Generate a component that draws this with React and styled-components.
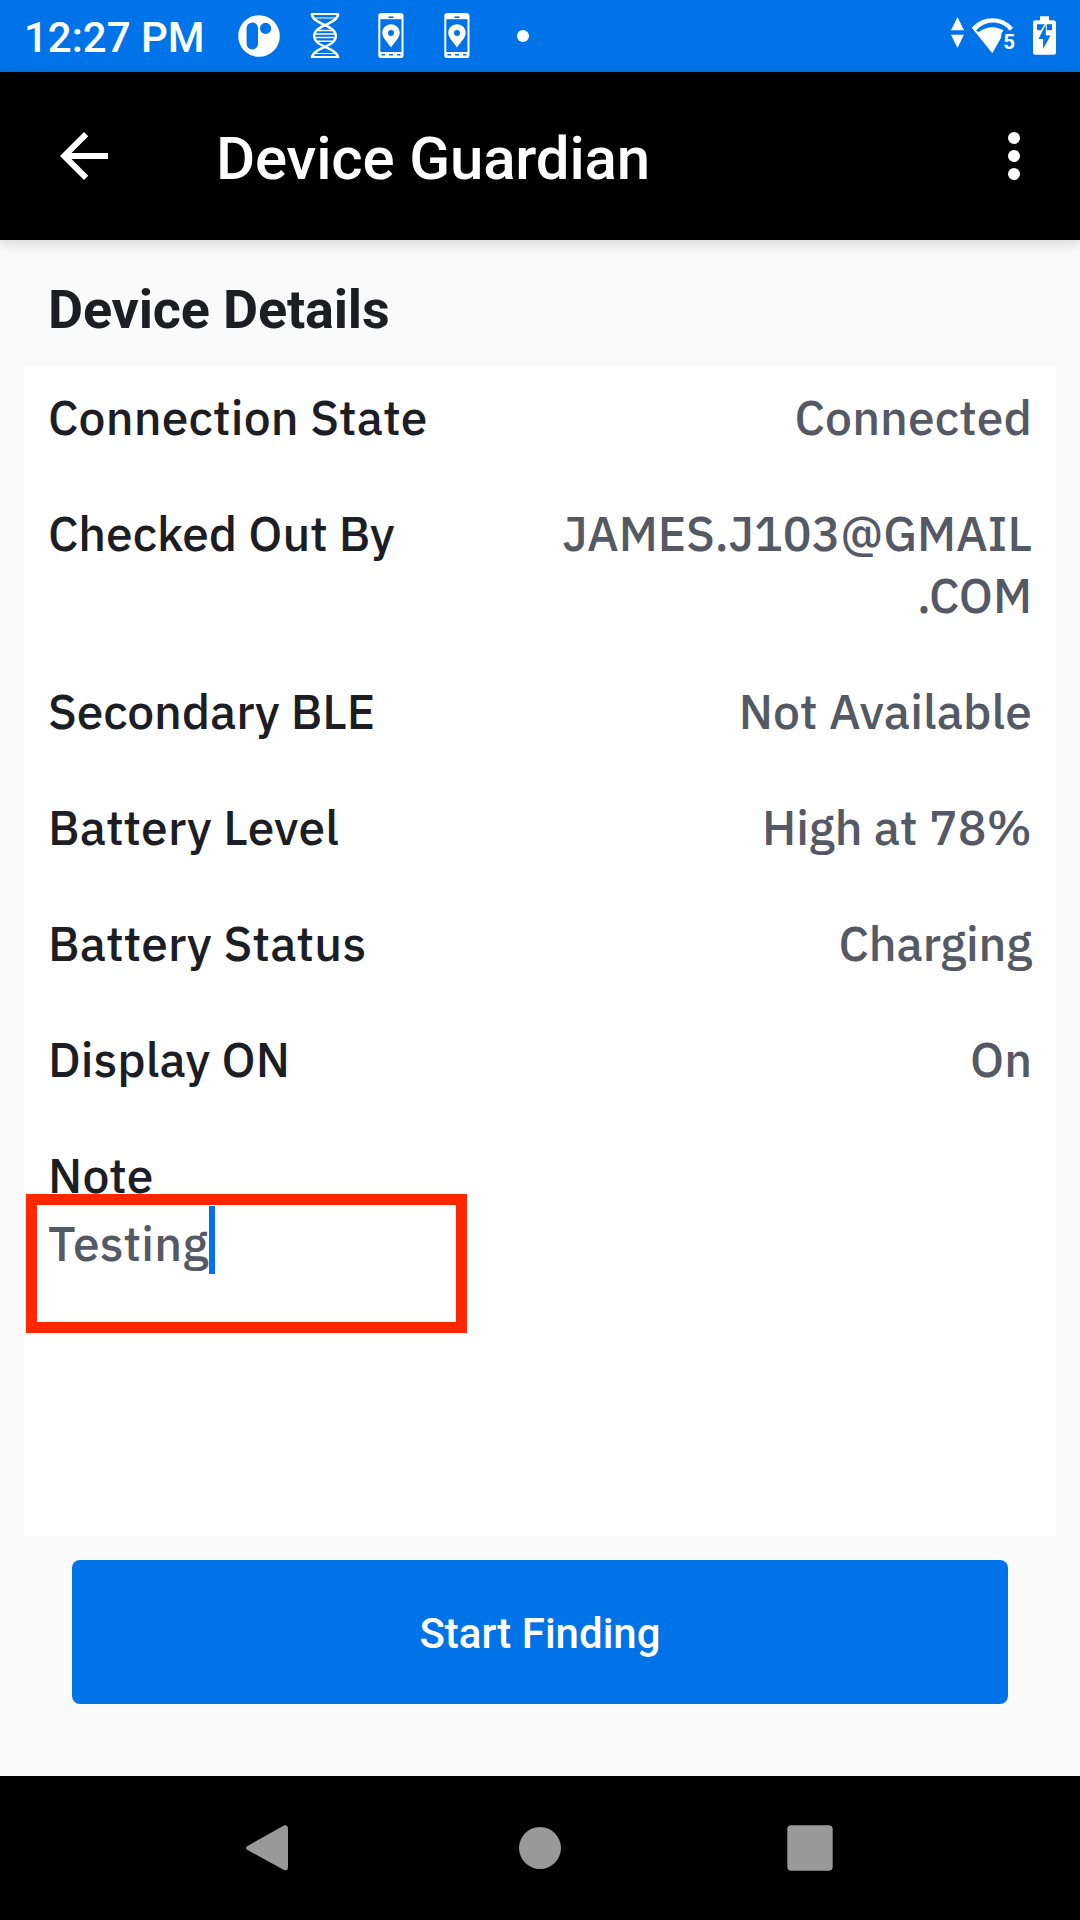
import React from "react";
import styled, { createGlobalStyle } from "styled-components";

const blue = "#0073e8";

const GlobalStyle = createGlobalStyle`
  * { box-sizing: border-box; }
  body { margin: 0; background: #fafafa; }
`;

const Screen = styled.div`
  display: flex;
  flex-direction: column;
  width: 1080px;
  height: 1920px;
  overflow: hidden;
  background: #fafafa;
  font-family: Roboto, "Noto Sans", sans-serif;
`;

const StatusBar = styled.header`
  display: flex;
  align-items: center;
  flex: none;
  height: 72px;
  padding-left: 24px;
  background: ${blue};
  color: #fff;
`;

const Clock = styled.time`
  width: 202px;
  padding-top: 3px;
  font-size: 42px;
  font-weight: 500;
  line-height: 50px;
  white-space: nowrap;
`;

const StatusIcon = styled.svg`
  display: block;
  flex: none;
  width: ${(p) => p.$width}px;
  height: 72px;
`;

const SystemIcons = styled.div`
  display: flex;
  margin-left: auto;
`;

const AppBar = styled.div`
  display: flex;
  align-items: center;
  flex: none;
  height: 168px;
  padding: 0 30px 0 48px;
  background: #000;
  color: #fff;
  box-shadow: 0 3px 12px rgba(0, 0, 0, 0.16);
`;

const IconButton = styled.button`
  display: flex;
  width: 72px;
  height: 72px;
  padding: 0;
  border: 0;
  background: none;
  color: inherit;

  svg {
    width: 72px;
    height: 72px;
    fill: currentColor;
  }
`;

const AppTitle = styled.h1`
  flex: 1;
  margin: 0;
  padding: 5px 0 0 96px;
  font-size: 60px;
  font-weight: 500;
  line-height: 70px;
  letter-spacing: -0.16px;
`;

const Content = styled.main`
  display: flex;
  flex-direction: column;
  flex: 1;
  padding: 38px 24px 72px;
`;

const SectionTitle = styled.h2`
  margin: 0 0 25px;
  padding-left: 24px;
  color: #1d1e23;
  font-size: 54px;
  font-weight: 700;
  line-height: 64px;
  letter-spacing: -0.18px;
`;

const Card = styled.section`
  display: flex;
  flex-direction: column;
  gap: 54px;
  flex: 1;
  padding: 19px 24px;
  background: #fff;
  font-family: "IBM Plex Sans", "Noto Sans", sans-serif;
  font-size: 48px;
  font-weight: 500;
  line-height: 62px;
`;

const Row = styled.div`
  display: flex;
  justify-content: space-between;
  align-items: flex-start;
`;

const Label = styled.span`
  color: #1d1e23;
  letter-spacing: ${(p) => p.$track || 0}px;
  white-space: nowrap;
`;

const Value = styled.span`
  max-width: 478px;
  color: #555964;
  letter-spacing: ${(p) => p.$track || 0}px;
  text-align: right;
  overflow-wrap: anywhere;
`;

const NoteBlock = styled.div`
  position: relative;
  display: flex;
  flex-direction: column;
  gap: 6px;
`;

const NoteInput = styled.div`
  display: flex;
  height: 62px;
  color: #555964;
  letter-spacing: 0.3px;
`;

const Caret = styled.span`
  width: 6px;
  height: 68px;
  margin-top: -6px;
  background: ${blue};
`;

const Highlight = styled.div`
  position: absolute;
  left: -22px;
  top: 50px;
  width: 441px;
  height: 139px;
  border: 11px solid #ff2600;
`;

const PrimaryButton = styled.button`
  flex: none;
  height: 144px;
  margin: 24px 48px 0;
  padding: 3px 0 0;
  border: 0;
  border-radius: 8px;
  background: ${blue};
  color: #fff;
  font-family: inherit;
  font-size: 42px;
  font-weight: 500;
`;

const NavBar = styled.nav`
  display: flex;
  flex: none;
  justify-content: center;
  gap: 198px;
  height: 144px;
  background: #000;

  svg {
    width: 72px;
    height: 144px;
    fill: #999;
  }
`;

const details = [
  { label: "Connection State", value: "Connected", labelTrack: 0.16, valueTrack: 0.1 },
  { label: "Checked Out By", value: "JAMES.J103@GMAIL.COM", labelTrack: -0.08, valueTrack: -0.06 },
  { label: "Secondary BLE", value: "Not Available", labelTrack: -0.12, valueTrack: 0.06 },
  { label: "Battery Level", value: "High at 78%", labelTrack: 0.19, valueTrack: 0 },
  { label: "Battery Status", value: "Charging", labelTrack: 0.22, valueTrack: -0.1 },
  { label: "Display ON", value: "On", labelTrack: 0.04, valueTrack: 0 },
];

const LogoIcon = () => (
  <StatusIcon $width={66} viewBox="0 0 66 72">
    <circle cx="33" cy="36" r="20.8" fill="#fff" />
    <rect x="20.6" y="22.5" width="11.4" height="27" rx="5.7" fill={blue} />
    <circle cx="39.6" cy="28.4" r="5.6" fill={blue} />
  </StatusIcon>
);

const DnaIcon = () => (
  <StatusIcon $width={66} viewBox="0 0 66 72" fill="none" stroke="#fff" strokeWidth="2">
    <path d="M19 14H47M19 57H47" strokeWidth="2.2" />
    <path d="M21 18H45M23 53.5H43" strokeWidth="1.2" />
    <path d="M19.8 14C21 25 43.8 24.5 43.8 36C43.8 47.5 21 47 19.8 58" strokeWidth="2.5" />
    <path d="M46.2 14C45 25 22.2 24.5 22.2 36C22.2 47.5 45 47 46.2 58" strokeWidth="2.5" />
    <path d="M26 30.5H40M24 34H42M24 37.5H42M26 41.3H40" strokeWidth="1.5" />
  </StatusIcon>
);

const PhonePinIcon = () => (
  <StatusIcon $width={66} viewBox="0 0 66 72">
    <rect x="20.3" y="13" width="25.2" height="45" rx="2.8" fill="#fff" />
    <rect x="22.3" y="19.2" width="21.2" height="32.8" fill={blue} />
    <rect x="30.5" y="16.4" width="5" height="1.6" fill={blue} />
    <path d="M23.5 54h3.5v1.4h-3.5zM31 54h4v1.4h-4zM39 54h3.5v1.4h-3.5z" fill={blue} />
    <path d="M33 24.3c-4.9 0-8.7 3.8-8.7 8.5 0 5.5 5.2 9.2 8.7 14.800 3.5-5.600 8.700-9.300 8.700-14.800 0-4.700-3.800-8.500-8.700-8.500z" fill="#fff" />
    <circle cx="33" cy="33" r="3" fill={blue} />
  </StatusIcon>
);

const DotIcon = () => (
  <StatusIcon $width={66} viewBox="0 0 66 72">
    <circle cx="33" cy="36" r="6" fill="#fff" />
  </StatusIcon>
);

const WifiIcon = () => (
  <StatusIcon $width={75} viewBox="948 0 75 72">
    <path d="M951 30.3L957.500 17l6.500 13.300zM951 34.700L957.500 48l6.500-13.300z" fill="#fff" />
    <path d="M992.300 53.300L971.800 27.800C983 15.200 1002 15.200 1013 27.800L1010.500 30.800H1005L992.300 53.300z" fill="#fff" />
    <path d="M976 30.700C985 20 1000 20 1008.800 29.500L1005.500 32C997.500 25.800 987 25.800 979 32z" fill={blue} />
    <path d="M1001.500 33.200Q1002.500 30.200 1006 30.200H1016V52H1000.800V42z" fill={blue} />
    <text x="1003.300" y="49" fill="#fff" fontFamily="Roboto, sans-serif" fontSize="20.500" fontWeight="700">5</text>
  </StatusIcon>
);

const BatteryIcon = () => (
  <StatusIcon $width={57} viewBox="1023 0 57 72">
    <path d="M1040 16.200h9v4h4.500q2.500 0 2.500 2.500v29.600q0 2.500-2.500 2.500h-18q-2.500 0-2.500-2.500v-29.600q0-2.500 2.500-2.500h4.500z" fill="#fff" />
    <path d="M1037 24.200h15v6h-15z" fill={blue} />
    <path d="M1046.800 20.500v12.500h6.500l-10 19v-12h-8z" fill="#fff" />
    <path d="M1045.800 24.500v11h4.700l-7.400 13.500v-10h-4.600z" fill={blue} />
  </StatusIcon>
);

export default function App() {
  return (
    <Screen>
      <GlobalStyle />
      <StatusBar>
        <Clock>12:27 PM</Clock>
        <LogoIcon />
        <DnaIcon />
        <PhonePinIcon />
        <PhonePinIcon />
        <DotIcon />
        <SystemIcons>
          <WifiIcon />
          <BatteryIcon />
        </SystemIcons>
      </StatusBar>
      <AppBar>
        <IconButton aria-label="Back">
          <svg viewBox="0 0 24 24">
            <path d="M20 11H7.830l5.590-5.590L12 4l-8 8 8 8 1.410-1.410L7.830 13H20v-2z" />
          </svg>
        </IconButton>
        <AppTitle>Device Guardian</AppTitle>
        <IconButton aria-label="More options">
          <svg viewBox="0 0 24 24">
            <circle cx="12" cy="6" r="2" />
            <circle cx="12" cy="12" r="2" />
            <circle cx="12" cy="18" r="2" />
          </svg>
        </IconButton>
      </AppBar>
      <Content>
        <SectionTitle>Device Details</SectionTitle>
        <Card>
          {details.map((item) => (
            <Row key={item.label}>
              <Label $track={item.labelTrack}>{item.label}</Label>
              <Value $track={item.valueTrack}>{item.value}</Value>
            </Row>
          ))}
          <NoteBlock>
            <Label $track={0.12}>Note</Label>
            <NoteInput>
              Testing
              <Caret />
            </NoteInput>
            <Highlight />
          </NoteBlock>
        </Card>
        <PrimaryButton>Start Finding</PrimaryButton>
      </Content>
      <NavBar>
        <svg viewBox="0 0 72 144">
          <path d="M54 53.500v37q0 5-4 3.500L13.500 74q-3-2 0-4L50 49.500q4-1 4 4z" />
        </svg>
        <svg viewBox="0 0 72 144">
          <circle cx="36" cy="72" r="21" />
        </svg>
        <svg viewBox="0 0 72 144">
          <rect x="13.300" y="49.300" width="45.400" height="45.400" rx="4" />
        </svg>
      </NavBar>
    </Screen>
  );
}
